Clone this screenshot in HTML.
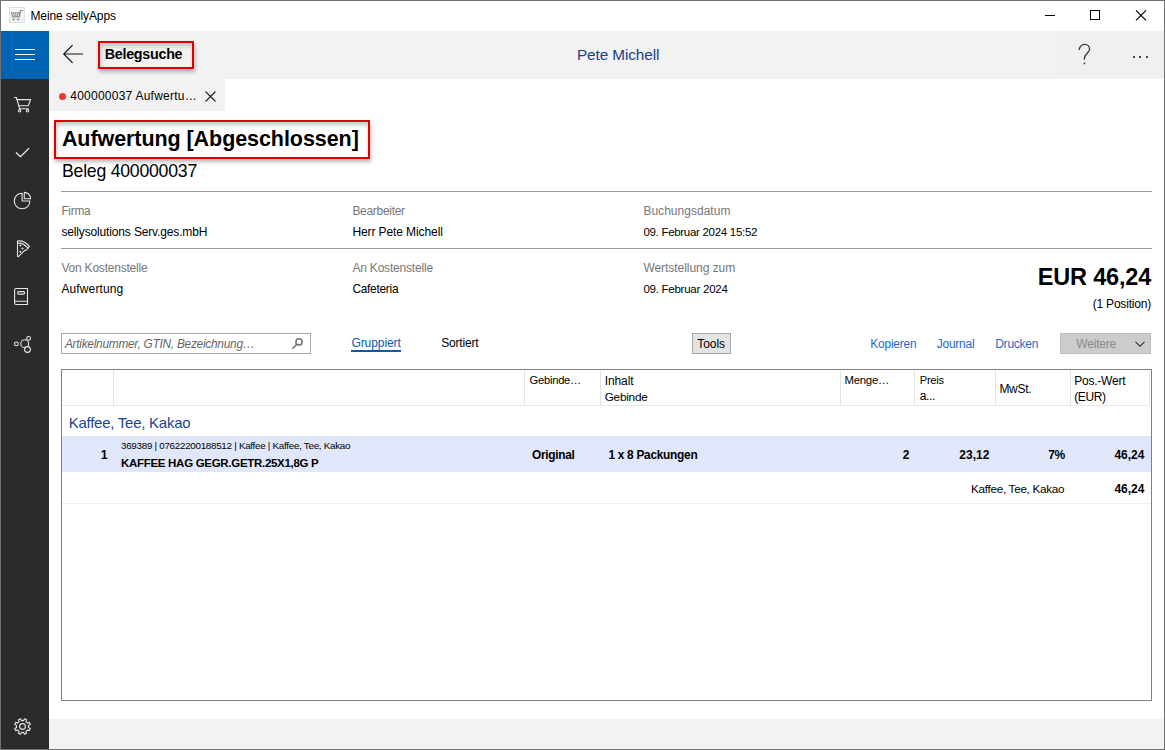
<!DOCTYPE html>
<html><head><meta charset="utf-8"><title>Belegsuche</title>
<style>
html,body{margin:0;padding:0;}
body{width:1165px;height:750px;overflow:hidden;position:relative;background:#fff;font-family:"Liberation Sans",sans-serif;color:#000;}
.t{position:absolute;line-height:1;white-space:nowrap;}
.r{position:absolute;}
svg{position:absolute;overflow:visible;}
</style></head><body>
<div class="r" style="left:0px;top:0px;width:1165px;height:750px;background:#fff;"></div>
<div class="t" style="top:10px;font-size:12px;letter-spacing:-0.140px;left:30.50px;">Meine sellyApps</div>
<svg style="left:0;top:0" width="30" height="30" viewBox="0 0 30 30">
<defs><linearGradient id="ig" x1="0" y1="0" x2="0" y2="1"><stop offset="0" stop-color="#fbfbfb"/><stop offset="1" stop-color="#ededed"/></linearGradient></defs>
<rect x="9.5" y="7.5" width="15" height="15" fill="url(#ig)" stroke="#e0e0e0"/>
<g fill="none" stroke="#8c8c8c" stroke-width="1.1">
<path d="M11.2 12 L12.8 16.9 H19.2 L20.2 12"/>
<path d="M13.4 12 L14.4 16.5 M15.7 12 L16 16.5 M18 12 L17.7 16.5" stroke-width="1"/>
<path d="M11.2 12.8 H12.3 M13.2 12.8 H14.3 M15.3 12.8 H16.3 M17.5 12.8 H18.7 M19.5 12.8 H20.3" stroke-width="1.4"/>
<path d="M19.4 16.5 L20.4 10.5 H23" stroke-width="1.2"/>
</g>
<ellipse cx="13.5" cy="19.3" rx="1.3" ry="0.9" fill="#8c8c8c"/><ellipse cx="18.2" cy="19.3" rx="1.3" ry="0.9" fill="#8c8c8c"/>
</svg>
<div class="r" style="left:1045px;top:15px;width:10px;height:1px;background:#000;"></div>
<div class="r" style="left:1090px;top:10px;width:8px;height:8px;border:1px solid #000;"></div>
<svg style="left:1136px;top:10px" width="11" height="11" viewBox="0 0 11 11"><path d="M0 0.3 L10 10.3 M10 0.3 L0 10.3" stroke="#000" stroke-width="1.15"/></svg>
<div class="r" style="left:1px;top:31px;width:48px;height:718px;background:#2b2b2b;"></div>
<div class="r" style="left:1px;top:31px;width:48px;height:48px;background:#0063b1;"></div>
<div class="r" style="left:15px;top:49px;width:20px;height:1px;background:#fff;"></div>
<div class="r" style="left:15px;top:54px;width:20px;height:1px;background:#fff;"></div>
<div class="r" style="left:15px;top:59px;width:20px;height:1px;background:#fff;"></div>
<svg style="left:0;top:0" width="49" height="750" viewBox="0 0 49 750">
<g fill="none" stroke="#e6e6e6" stroke-width="1.1" stroke-linecap="round" stroke-linejoin="round">
<path d="M14.6 97.5 H16.4 L19.6 108.7 H28.5"/>
<path d="M17 99.6 H30.6 L28.3 105.8 H18.7"/>
<circle cx="19.6" cy="110.8" r="1.2"/><circle cx="27.5" cy="110.8" r="1.2"/>
<path d="M16.3 152.7 L20.4 156.7 L28.7 148.5" stroke-width="1.2"/>
<path d="M22.1 193.2 A7.8 7.8 0 1 0 29.9 201 H22.1 Z"/>
<path d="M24.3 192.4 V198.7 H30.6 A6.3 6.3 0 0 0 24.3 192.4 Z"/>
<path d="M17.5 241 Q24.5 240.2 29.4 246.4 L27.3 248.9 Q26.5 250.8 25 250.2 L18.3 256.6 Q17.5 257 17.5 256 Z"/>
<path d="M18.2 243.1 Q23.6 242.8 27.8 248"/>
<g fill="#e6e6e6" stroke="none"><rect x="19.5" y="244.7" width="1.7" height="1.7" transform="rotate(45 20.35 245.55)"/><rect x="21.6" y="247.6" width="1.7" height="1.7" transform="rotate(45 22.45 248.45)"/><rect x="19.5" y="250.9" width="1.7" height="1.7" transform="rotate(45 20.35 251.75)"/></g>
<path d="M14.6 290 Q14.6 288.5 16.1 288.5 H27.5 V304.5 H16.1 Q14.6 304.5 14.6 303 Z"/>
<path d="M14.6 301.3 H27.5"/>
<rect x="17.6" y="291.6" width="7" height="2.5" rx="1.2"/>
<circle cx="16.4" cy="343.9" r="1.9"/>
<circle cx="24.7" cy="343.7" r="3.9"/>
<circle cx="28.6" cy="338.4" r="1.9" fill="#2b2b2b"/>
<circle cx="27.5" cy="349.5" r="2.9" fill="#2b2b2b"/>
<path d="M22.50 720.50 L23.59 720.60 L24.44 718.74 L26.62 719.64 L25.90 721.56 L26.74 722.26 L27.44 723.10 L29.36 722.38 L30.26 724.56 L28.40 725.41 L28.50 726.50 L28.40 727.59 L30.26 728.44 L29.36 730.62 L27.44 729.90 L26.74 730.74 L25.90 731.44 L26.62 733.36 L24.44 734.26 L23.59 732.40 L22.50 732.50 L21.41 732.40 L20.56 734.26 L18.38 733.36 L19.10 731.44 L18.26 730.74 L17.56 729.90 L15.64 730.62 L14.74 728.44 L16.60 727.59 L16.50 726.50 L16.60 725.41 L14.74 724.56 L15.64 722.38 L17.56 723.10 L18.26 722.26 L19.10 721.56 L18.38 719.64 L20.56 718.74 L21.41 720.60 Z"/>
<circle cx="22.5" cy="726.5" r="2.9"/>
</g></svg>
<div class="r" style="left:49px;top:31px;width:1115px;height:48px;background:#f2f2f2;"></div>
<div class="r" style="left:1054px;top:31px;width:110px;height:48px;background:#f0f0f0;"></div>
<svg style="left:62px;top:44px" width="22" height="20" viewBox="0 0 22 20"><path d="M2 10 H21" fill="none" stroke="#444" stroke-width="1.3"/><path d="M10.6 1.2 L1.8 10 L10.6 18.8" fill="none" stroke="#111" stroke-width="1.2"/></svg>
<div class="r" style="left:98px;top:41px;width:92px;height:24px;border:2px solid #dc0000;box-shadow:1px 3px 4px rgba(0,0,0,0.28), inset 1px 3px 4px rgba(0,0,0,0.2);background:#f2f2f2;"></div>
<div class="t" style="top:47px;font-size:14.3px;letter-spacing:-0.266px;left:104.70px;font-weight:700;">Belegsuche</div>
<div class="t" style="top:47px;font-size:15.3px;letter-spacing:-0.083px;left:577.00px;color:#1a3d90;">Pete Michell</div>
<svg style="left:0;top:0" width="1100" height="70" viewBox="0 0 1100 70"><path d="M1079.3 50 C1079.3 46.5 1081.8 44.3 1084.5 44.3 C1087.4 44.3 1089.6 46.5 1089.6 49.3 C1089.6 52.6 1084.4 54.2 1084.4 58.3 V59.8" fill="none" stroke="#333" stroke-width="1.25"/><circle cx="1084.4" cy="63.4" r="0.85" fill="#333"/></svg>
<div class="r" style="left:1133px;top:55.5px;width:2px;height:2px;border-radius:50%;background:#111"></div>
<div class="r" style="left:1139.3px;top:55.5px;width:2px;height:2px;border-radius:50%;background:#111"></div>
<div class="r" style="left:1146px;top:55.5px;width:2px;height:2px;border-radius:50%;background:#111"></div>
<div class="r" style="left:49px;top:79px;width:176px;height:32px;background:#f2f2f2;"></div>
<div class="r" style="left:58.5px;top:92.5px;width:7px;height:7px;border-radius:50%;background:#f0372c"></div>
<div class="t" style="top:90px;font-size:12px;letter-spacing:0.239px;left:70.30px;">400000037 Aufwertu…</div>
<svg style="left:205px;top:91px" width="11" height="11" viewBox="0 0 11 11"><path d="M0.5 0.5 L10.5 10.5 M10.5 0.5 L0.5 10.5" stroke="#222" stroke-width="1.1"/></svg>
<div class="r" style="left:54px;top:120px;width:312px;height:35px;border:2px solid #dc0000;box-shadow:1px 3px 4px rgba(0,0,0,0.28), inset 1px 3px 4px rgba(0,0,0,0.24);"></div>
<div class="t" style="top:129px;font-size:21.5px;letter-spacing:-0.069px;left:61.90px;font-weight:700;">Aufwertung [Abgeschlossen]</div>
<div class="t" style="top:163px;font-size:17.7px;letter-spacing:-0.248px;left:62.00px;">Beleg 400000037</div>
<div class="r" style="left:61px;top:191px;width:1091px;height:1px;background:#9c9c9c;"></div>
<div class="r" style="left:61px;top:248px;width:1091px;height:1px;background:#9c9c9c;"></div>
<div class="t" style="top:206px;font-size:11.9px;letter-spacing:-0.291px;left:61.40px;color:#777;">Firma</div>
<div class="t" style="top:205px;font-size:12px;letter-spacing:-0.298px;left:352.40px;color:#777;">Bearbeiter</div>
<div class="t" style="top:205px;font-size:12px;letter-spacing:0.025px;left:643.40px;color:#777;">Buchungsdatum</div>
<div class="t" style="top:226px;font-size:12px;letter-spacing:-0.147px;left:61.40px;">sellysolutions Serv.ges.mbH</div>
<div class="t" style="top:226px;font-size:12px;letter-spacing:-0.096px;left:352.40px;">Herr Pete Michell</div>
<div class="t" style="top:227px;font-size:11.5px;letter-spacing:-0.294px;left:643.40px;">09. Februar 2024 15:52</div>
<div class="t" style="top:262px;font-size:12px;letter-spacing:-0.207px;left:61.40px;color:#777;">Von Kostenstelle</div>
<div class="t" style="top:262px;font-size:12px;letter-spacing:-0.193px;left:352.40px;color:#777;">An Kostenstelle</div>
<div class="t" style="top:262px;font-size:12px;letter-spacing:-0.044px;left:643.40px;color:#777;">Wertstellung zum</div>
<div class="t" style="top:283px;font-size:12px;letter-spacing:0.131px;left:61.40px;">Aufwertung</div>
<div class="t" style="top:284px;font-size:11.9px;letter-spacing:-0.264px;left:352.40px;">Cafeteria</div>
<div class="t" style="top:284px;font-size:11.5px;letter-spacing:-0.254px;left:643.40px;">09. Februar 2024</div>
<div class="t" style="top:266px;font-size:23.5px;letter-spacing:-0.189px;right:13.95px;text-align:right;font-weight:700;">EUR 46,24</div>
<div class="t" style="top:298px;font-size:12px;letter-spacing:-0.202px;right:14.03px;text-align:right;">(1 Position)</div>
<div class="r" style="left:61px;top:333px;width:248px;height:19px;border:1px solid #a4a7ac;background:#fff"></div>
<div class="t" style="top:339px;font-size:11.9px;letter-spacing:-0.266px;left:64.89px;color:#666;font-style:italic;">Artikelnummer, GTIN, Bezeichnung…</div>
<svg style="left:0;top:0" width="320" height="360" viewBox="0 0 320 360"><circle cx="299" cy="341.9" r="3.1" fill="none" stroke="#707070" stroke-width="1.5"/><path d="M296.8 344.3 L292.3 348.7" stroke="#707070" stroke-width="1.6"/></svg>
<div class="t" style="top:337px;font-size:12px;letter-spacing:-0.067px;left:351.40px;color:#0a5ab4;">Gruppiert</div>
<div class="r" style="left:351px;top:350px;width:50px;height:2px;background:#0a5ab4;"></div>
<div class="t" style="top:337px;font-size:12px;letter-spacing:-0.171px;left:441.20px;">Sortiert</div>
<div class="r" style="left:692px;top:333px;width:37px;height:19px;border:1px solid #a8a8a8;background:#e3e3e3"></div>
<div class="t" style="top:338px;font-size:12px;letter-spacing:-0.030px;left:697.20px;">Tools</div>
<div class="t" style="top:338px;font-size:12px;letter-spacing:-0.237px;left:870.30px;color:#2768c7;">Kopieren</div>
<div class="t" style="top:338px;font-size:12px;letter-spacing:-0.243px;left:936.70px;color:#2768c7;">Journal</div>
<div class="t" style="top:338px;font-size:12px;letter-spacing:-0.233px;left:995.20px;color:#2768c7;">Drucken</div>
<div class="r" style="left:1060px;top:333px;width:89px;height:19px;border:1px solid #bdbdbd;background:#cccccc"></div>
<div class="t" style="top:338px;font-size:12px;letter-spacing:-0.200px;left:1076.30px;color:#8a8a8a;">Weitere</div>
<svg style="left:1135px;top:341px" width="10" height="6" viewBox="0 0 10 6"><path d="M0.5 0.8 L5 5.2 L9.5 0.8" fill="none" stroke="#333" stroke-width="1.1"/></svg>
<div class="r" style="left:61px;top:369px;width:1089px;height:330px;border:1px solid #7b8089;"></div>
<div class="r" style="left:62px;top:405px;width:1088px;height:1px;background:#e8e8e8;"></div>
<div class="r" style="left:113px;top:370px;width:1px;height:35px;background:#e3e3e3;"></div>
<div class="r" style="left:524px;top:370px;width:1px;height:35px;background:#e3e3e3;"></div>
<div class="r" style="left:600px;top:370px;width:1px;height:35px;background:#e3e3e3;"></div>
<div class="r" style="left:840px;top:370px;width:1px;height:35px;background:#e3e3e3;"></div>
<div class="r" style="left:914px;top:370px;width:1px;height:35px;background:#e3e3e3;"></div>
<div class="r" style="left:995px;top:370px;width:1px;height:35px;background:#e3e3e3;"></div>
<div class="r" style="left:1070px;top:370px;width:1px;height:35px;background:#e3e3e3;"></div>
<div class="r" style="left:1149px;top:370px;width:1px;height:35px;background:#e3e3e3;"></div>
<div class="t" style="top:375px;font-size:11.2px;letter-spacing:-0.262px;left:529.60px;">Gebinde…</div>
<div class="t" style="top:375px;font-size:12px;letter-spacing:-0.088px;left:604.70px;">Inhalt</div>
<div class="t" style="top:392px;font-size:11.8px;letter-spacing:-0.251px;left:604.70px;">Gebinde</div>
<div class="t" style="top:375px;font-size:11.4px;letter-spacing:-0.297px;left:844.60px;">Menge…</div>
<div class="t" style="top:375px;font-size:11.1px;letter-spacing:-0.277px;left:919.80px;">Preis</div>
<div class="t" style="top:390px;font-size:12px;left:919.80px;letter-spacing:-0.4px;">a...</div>
<div class="t" style="top:383px;font-size:12px;letter-spacing:-0.265px;left:999.40px;">MwSt.</div>
<div class="t" style="top:375px;font-size:12px;letter-spacing:-0.225px;left:1074.20px;">Pos.-Wert</div>
<div class="t" style="top:391px;font-size:12px;left:1074.20px;letter-spacing:-0.35px;">(EUR)</div>
<div class="t" style="top:415px;font-size:15px;letter-spacing:-0.254px;left:68.70px;color:#1a4494;">Kaffee, Tee, Kakao</div>
<div class="r" style="left:62px;top:436px;width:1089px;height:36px;background:#e1e7fb;"></div>
<div class="t" style="top:449px;font-size:12.5px;right:1057.19px;text-align:right;font-weight:700;">1</div>
<div class="t" style="top:441px;font-size:9.8px;letter-spacing:-0.271px;left:121.00px;">369389 | 07622200188512 | Kaffee | Kaffee, Tee, Kakao</div>
<div class="t" style="top:458px;font-size:11.5px;letter-spacing:-0.297px;left:121.00px;font-weight:700;">KAFFEE HAG GEGR.GETR.25X1,8G P</div>
<div class="t" style="top:450px;font-size:11.9px;letter-spacing:-0.297px;left:532.00px;font-weight:700;">Original</div>
<div class="t" style="top:450px;font-size:11.9px;letter-spacing:-0.281px;left:608.40px;font-weight:700;">1 x 8 Packungen</div>
<div class="t" style="top:449px;font-size:12px;right:255.69px;text-align:right;font-weight:700;">2</div>
<div class="t" style="top:449px;font-size:12px;letter-spacing:0.010px;right:175.62px;text-align:right;font-weight:700;">23,12</div>
<div class="t" style="top:449px;font-size:12px;right:100.40px;text-align:right;font-weight:700;letter-spacing:-0.5px;">7%</div>
<div class="t" style="top:449px;font-size:12px;letter-spacing:-0.015px;right:20.64px;text-align:right;font-weight:700;">46,24</div>
<div class="t" style="top:483px;font-size:11.7px;letter-spacing:-0.280px;right:100.69px;text-align:right;">Kaffee, Tee, Kakao</div>
<div class="t" style="top:483px;font-size:12px;letter-spacing:-0.015px;right:20.64px;text-align:right;font-weight:700;">46,24</div>
<div class="r" style="left:62px;top:503px;width:1089px;height:1px;background:#ededed;"></div>
<div class="r" style="left:49px;top:719px;width:1115px;height:30px;background:#f2f2f2;"></div>
<div class="r" style="left:0;top:0;width:1163px;height:748px;border:1px solid #707070;"></div>
</body></html>
